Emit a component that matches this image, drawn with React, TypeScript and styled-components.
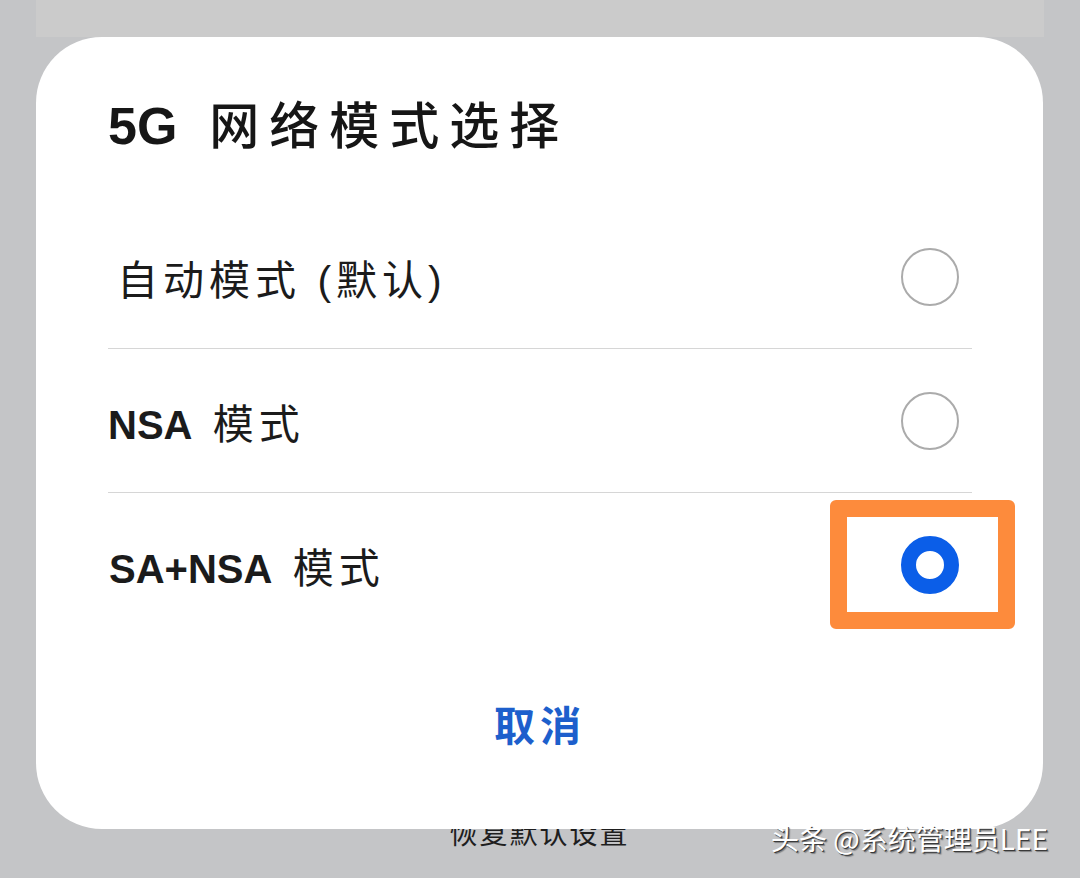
import styled, { createGlobalStyle } from 'styled-components';

const GlobalStyle = createGlobalStyle`
  html, body {
    margin: 0;
    padding: 0;
    background: #c4c5c7;
  }
  body {
    font-family: "Liberation Sans", "Noto Sans CJK SC", sans-serif;
  }
`;

const Page = styled.div`
  position: relative;
  width: 1080px;
  height: 878px;
  overflow: hidden;
  padding: 0 36px;
  box-sizing: border-box;
  background: #c4c5c7;
`;

const TopBand = styled.div`
  height: 37px;
  background: #cbcbcb;
`;

const Dialog = styled.div`
  position: relative;
  z-index: 1;
  width: 1007px;
  height: 792px;
  box-sizing: border-box;
  padding: 0 71px 0 72px;
  background: #ffffff;
  border-radius: 66px;
  display: flex;
  flex-direction: column;
`;

const Title = styled.h1`
  margin: 59px 0 0;
  height: 60px;
  line-height: 60px;
  font-size: 50px;
  font-weight: 500;
  letter-spacing: 10px;
  color: #161616;
  white-space: nowrap;
`;

const TitleLatin = styled.span`
  font-weight: 700;
  font-size: 52px;
  letter-spacing: 0;
  margin-right: 8px;
`;

const List = styled.div`
  margin-top: 49px;
  display: flex;
  flex-direction: column;
`;

const Row = styled.div<{ $last?: boolean }>`
  position: relative;
  height: 143px;
  display: flex;
  align-items: center;
  justify-content: space-between;
  border-bottom: ${(p) => (p.$last ? 'none' : '1px solid #d6d6d6')};
`;

const Label = styled.span<{ $indent?: number }>`
  padding-left: ${(p) => p.$indent ?? 0}px;
  font-size: 41px;
  letter-spacing: 5px;
  color: #1b1b1b;
  white-space: nowrap;
`;

const Latin = styled.span`
  font-weight: 700;
  font-size: 40px;
  letter-spacing: 0;
  margin-right: 4px;
`;

const Radio = styled.span<{ $checked?: boolean }>`
  width: 58px;
  height: 58px;
  margin-right: 13px;
  box-sizing: border-box;
  border-radius: 50%;
  background: #ffffff;
  border: ${(p) => (p.$checked ? '15px solid #0b5ee8' : '2.5px solid #ababab')};
`;

const Highlight = styled.div`
  position: absolute;
  left: 722px;
  top: 7px;
  width: 185px;
  height: 129px;
  box-sizing: border-box;
  border: 17px solid #fd8b3c;
  border-radius: 6px;
  pointer-events: none;
`;

const CancelButton = styled.button`
  margin: 43px auto 0;
  height: 88px;
  padding: 0 20px;
  border: none;
  background: transparent;
  font-family: "Noto Sans CJK SC", sans-serif;
  font-size: 41px;
  font-weight: 700;
  letter-spacing: 5px;
  color: #1d5fcc;
`;

const BehindLabel = styled.div`
  position: relative;
  z-index: 0;
  margin-top: -14px;
  width: 1007px;
  text-align: center;
  font-family: "Noto Sans CJK SC", sans-serif;
  font-size: 28px;
  line-height: 34px;
  letter-spacing: 2px;
  color: #1e1e1e;
`;

const Watermark = styled.div`
  position: absolute;
  left: 771px;
  top: 819px;
  z-index: 2;
  font-family: "Noto Sans CJK SC", sans-serif;
  font-size: 28px;
  line-height: 38px;
  color: #ffffff;
  text-shadow: 1px 1px 0 #3a3a3a, 2px 2px 1px rgba(0, 0, 0, 0.35);
  white-space: nowrap;
`;

const options = [
  { id: 'auto', label: <>自动模式 (默认)</>, indent: 9, checked: false },
  { id: 'nsa', label: <><Latin>NSA</Latin> 模式</>, indent: 0, checked: false },
  { id: 'sa', label: <><Latin>SA+NSA</Latin> 模式</>, indent: 1, checked: true },
];

export default function App() {
  return (
    <Page>
      <GlobalStyle />
      <TopBand />
      <Dialog>
        <Title>
          <TitleLatin>5G</TitleLatin> 网络模式选择
        </Title>
        <List>
          {options.map((opt, i) => (
            <Row key={opt.id} $last={i === options.length - 1}>
              <Label $indent={opt.indent}>{opt.label}</Label>
              <Radio $checked={opt.checked} />
              {opt.checked && <Highlight />}
            </Row>
          ))}
        </List>
        <CancelButton>取消</CancelButton>
      </Dialog>
      <BehindLabel>恢复默认设置</BehindLabel>
      <Watermark>头条 @系统管理员LEE</Watermark>
    </Page>
  );
}
